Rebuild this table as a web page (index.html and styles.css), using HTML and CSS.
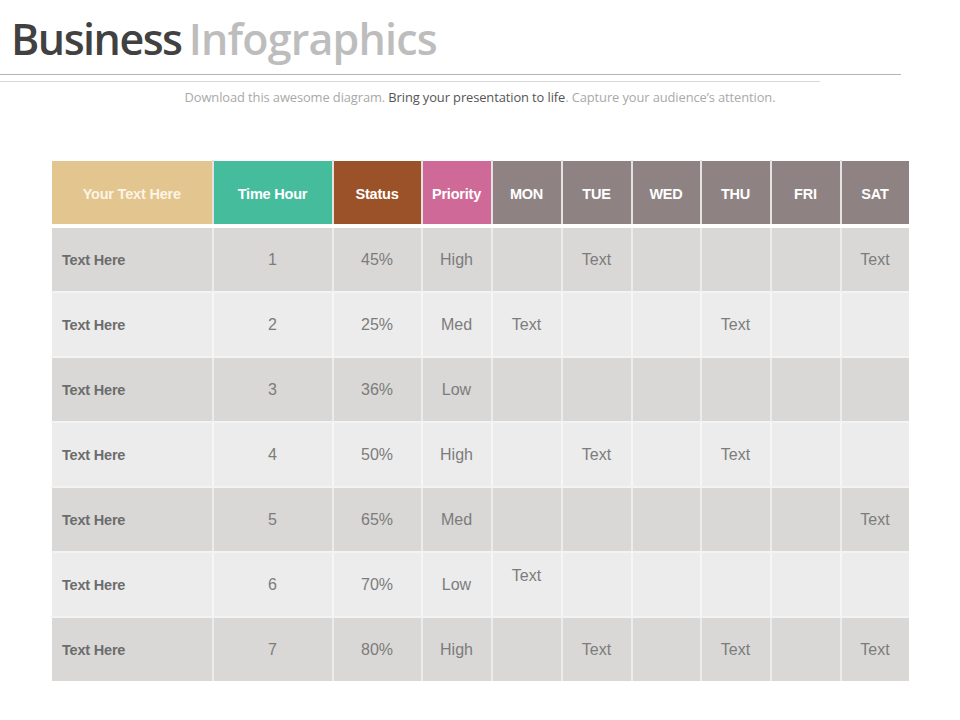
FILE: index.html
```html
<!DOCTYPE html>
<html>
<head>
<meta charset="utf-8">
<title>Business Infographics</title>
<link rel="stylesheet" href="styles.css">
</head>
<body>
<header class="head">
  <h1 class="title"><span class="title-dark">Business</span> <span class="title-light">Infographics</span></h1>
  <div class="rule rule-top"></div>
  <div class="rule rule-bottom"></div>
  <p class="subtitle">Download this awesome diagram. <span class="sub-dark">Bring your presentation to life</span>. Capture your audience’s attention.</p>
</header>
<main class="wrap">
  <table class="schedule">
    <colgroup>
      <col class="c-name"><col class="c-time"><col class="c-status"><col class="c-prio">
      <col class="c-day"><col class="c-day"><col class="c-day c-narrow"><col class="c-day"><col class="c-day"><col class="c-day c-last">
    </colgroup>
    <thead>
      <tr>
        <th class="h-name">Your Text Here</th>
        <th class="h-time">Time Hour</th>
        <th class="h-status">Status</th>
        <th class="h-prio">Priority</th>
        <th class="h-day">MON</th>
        <th class="h-day">TUE</th>
        <th class="h-day">WED</th>
        <th class="h-day">THU</th>
        <th class="h-day">FRI</th>
        <th class="h-day">SAT</th>
      </tr>
    </thead>
    <tbody>
      <tr class="dark">
        <td class="name">Text Here</td><td>1</td><td>45%</td><td>High</td>
        <td></td><td>Text</td><td></td><td></td><td></td><td>Text</td>
      </tr>
      <tr class="light">
        <td class="name">Text Here</td><td>2</td><td>25%</td><td>Med</td>
        <td>Text</td><td></td><td></td><td>Text</td><td></td><td></td>
      </tr>
      <tr class="dark">
        <td class="name">Text Here</td><td>3</td><td>36%</td><td>Low</td>
        <td></td><td></td><td></td><td></td><td></td><td></td>
      </tr>
      <tr class="light">
        <td class="name">Text Here</td><td>4</td><td>50%</td><td>High</td>
        <td></td><td>Text</td><td></td><td>Text</td><td></td><td></td>
      </tr>
      <tr class="dark">
        <td class="name">Text Here</td><td>5</td><td>65%</td><td>Med</td>
        <td></td><td></td><td></td><td></td><td></td><td>Text</td>
      </tr>
      <tr class="light">
        <td class="name">Text Here</td><td>6</td><td>70%</td><td>Low</td>
        <td class="raised">Text</td><td></td><td></td><td></td><td></td><td></td>
      </tr>
      <tr class="dark">
        <td class="name">Text Here</td><td>7</td><td>80%</td><td>High</td>
        <td></td><td>Text</td><td></td><td>Text</td><td></td><td>Text</td>
      </tr>
    </tbody>
  </table>
</main>
</body>
</html>
```

FILE: styles.css
```css
html, body {
  margin: 0;
  padding: 0;
  background: #ffffff;
}

body {
  width: 960px;
  height: 720px;
  overflow: hidden;
  font-family: "Liberation Sans", Arial, sans-serif;
}

.head {
  padding-top: 11px;
}

.title {
  margin: 0 0 0 11px;
  font-family: "Open Sans", "Liberation Sans", sans-serif;
  font-weight: 600;
  font-size: 43px;
  line-height: 56px;
  letter-spacing: -1.1px;
  word-spacing: -3px;
}

.title-dark {
  color: #414141;
  letter-spacing: -1.5px;
}

.title-light {
  color: #bdbdbd;
  letter-spacing: -0.8px;
}

.rule {
  height: 1px;
}

.rule-top {
  width: 901px;
  background: #b4b4b4;
  margin-top: 7px;
}

.rule-bottom {
  width: 820px;
  background: #d6d6d6;
  margin-top: 6px;
}

.subtitle {
  margin: 7px 0 0 0;
  text-align: center;
  font-family: "Open Sans", "Liberation Sans", sans-serif;
  font-size: 12.9px;
  line-height: 16px;
  color: #a9a9a9;
  letter-spacing: -0.1px;
}

.sub-dark {
  color: #555555;
}

.wrap {
  padding: 55px 0 0 51px;
}

.schedule {
  border-collapse: collapse;
  table-layout: fixed;
  width: 856px;
}

.c-name { width: 161px; }
.c-time { width: 120px; }
.c-status { width: 89px; }
.c-prio { width: 70px; }
.c-day { width: 70px; }
.c-narrow { width: 69px; }
.c-last { width: 68px; }

.schedule th {
  height: 60px;
  padding: 3px 0 0 0;
  color: #ffffff;
  font-size: 14.5px;
  font-weight: bold;
  letter-spacing: -0.2px;
  text-align: center;
  border-left: 2px solid #e6e2e2;
  border-bottom: 4px solid #ffffff;
  border-top: 1px solid #ffffff;
}

.schedule th:first-child {
  border-left: 1px solid #ffffff;
}

.h-name { background: #e2c58f; color: #fcf4e4 !important; }
.h-time { background: #45bc9c; }
.h-status { background: #9c5228; }
.h-prio { background: #cf6a98; }
.h-day { background: #8f8283; }

.schedule td {
  height: 63px;
  padding: 0;
  text-align: center;
  font-size: 16px;
  color: #7c7c7c;
  border-left: 2px solid #ececec;
  border-bottom: 2px solid #f3f3f3;
}

.schedule td:first-child {
  border-left: 1px solid #ffffff;
}

.schedule tr.dark td {
  background: #d9d8d7;
}

.schedule tr.light td {
  background: #ececec;
  border-left-color: #f6f6f6;
}

.schedule tr.light td:first-child,
.schedule tr.dark td:first-child {
  border-left-color: #ffffff;
}

.schedule tbody tr:last-child td {
  border-bottom: 0;
}

.schedule td.name {
  text-align: left;
  padding-left: 10px;
  font-size: 14.5px;
  font-weight: bold;
  letter-spacing: -0.2px;
  color: #6c6c6c;
}

.schedule td.raised {
  vertical-align: top;
  padding-top: 14px;
  height: 49px;
}
```
